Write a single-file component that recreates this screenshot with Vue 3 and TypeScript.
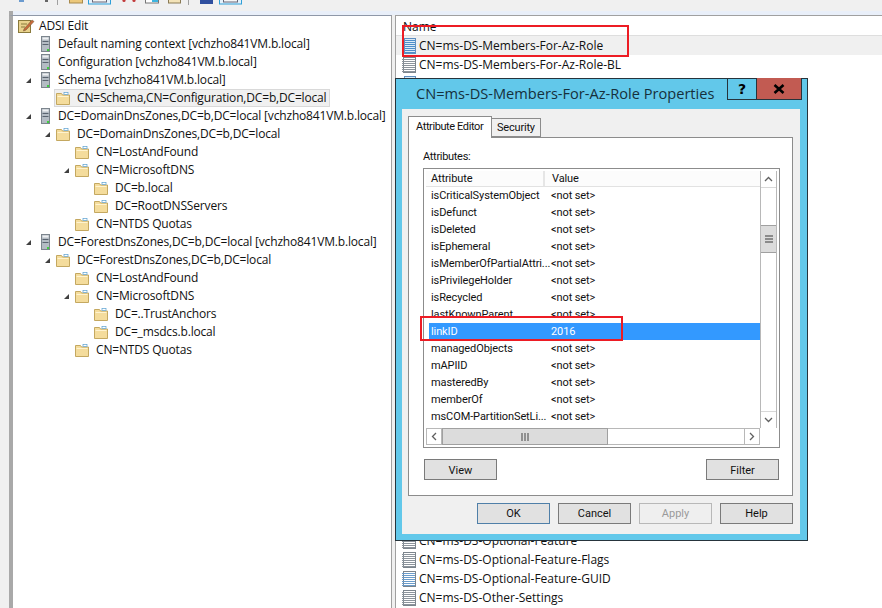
<script setup lang="ts">
interface TreeNode { depth: number; label: string; icon: 'root' | 'server' | 'folder'; open?: boolean; sel?: boolean }
const tree: TreeNode[] = [
  { depth: 0, label: 'ADSI Edit', icon: 'root' },
  { depth: 1, label: 'Default naming context [vchzho841VM.b.local]', icon: 'server' },
  { depth: 1, label: 'Configuration [vchzho841VM.b.local]', icon: 'server' },
  { depth: 1, label: 'Schema [vchzho841VM.b.local]', icon: 'server', open: true },
  { depth: 2, label: 'CN=Schema,CN=Configuration,DC=b,DC=local', icon: 'folder', sel: true },
  { depth: 1, label: 'DC=DomainDnsZones,DC=b,DC=local [vchzho841VM.b.local]', icon: 'server', open: true },
  { depth: 2, label: 'DC=DomainDnsZones,DC=b,DC=local', icon: 'folder', open: true },
  { depth: 3, label: 'CN=LostAndFound', icon: 'folder' },
  { depth: 3, label: 'CN=MicrosoftDNS', icon: 'folder', open: true },
  { depth: 4, label: 'DC=b.local', icon: 'folder' },
  { depth: 4, label: 'DC=RootDNSServers', icon: 'folder' },
  { depth: 3, label: 'CN=NTDS Quotas', icon: 'folder' },
  { depth: 1, label: 'DC=ForestDnsZones,DC=b,DC=local [vchzho841VM.b.local]', icon: 'server', open: true },
  { depth: 2, label: 'DC=ForestDnsZones,DC=b,DC=local', icon: 'folder', open: true },
  { depth: 3, label: 'CN=LostAndFound', icon: 'folder' },
  { depth: 3, label: 'CN=MicrosoftDNS', icon: 'folder', open: true },
  { depth: 4, label: 'DC=..TrustAnchors', icon: 'folder' },
  { depth: 4, label: 'DC=_msdcs.b.local', icon: 'folder' },
  { depth: 3, label: 'CN=NTDS Quotas', icon: 'folder' },
]
const attrs = [
  ['isCriticalSystemObject', '<not set>'],
  ['isDefunct', '<not set>'],
  ['isDeleted', '<not set>'],
  ['isEphemeral', '<not set>'],
  ['isMemberOfPartialAttri...', '<not set>'],
  ['isPrivilegeHolder', '<not set>'],
  ['isRecycled', '<not set>'],
  ['lastKnownParent', '<not set>'],
  ['linkID', '2016'],
  ['managedObjects', '<not set>'],
  ['mAPIID', '<not set>'],
  ['masteredBy', '<not set>'],
  ['memberOf', '<not set>'],
  ['msCOM-PartitionSetLi...', '<not set>'],
]
const lowerRows = [
  'CN=ms-DS-Optional-Feature',
  'CN=ms-DS-Optional-Feature-Flags',
  'CN=ms-DS-Optional-Feature-GUID',
  'CN=ms-DS-Other-Settings',
]
const lines = [2, 4, 6, 8, 10, 12, 14]
</script>

<template>
  <div class="screen">
    <div class="toolbar">
      <svg class="tool-art" width="260" height="11" viewBox="0 0 260 11">
        <path d="M19 1h5" fill="none" stroke="#3f7fc4" stroke-width="1.500" />
        <path d="M45 1h3" fill="none" stroke="#666" stroke-width="2" />
        <rect x="57" y="0" width="1" height="5" fill="#a0a0a0" />
        <rect x="69.500" y="-2" width="13" height="5" fill="#ecc87a" stroke="#a88a4c" />
        <rect x="88.500" y="-3" width="22" height="7" fill="#e4f1fa" stroke="#2f9fd8" />
        <rect x="92.500" y="-2" width="14" height="4" fill="#f6f6f6" stroke="#667" />
        <circle cx="124" cy="0.500" r="1.600" fill="#c23a3a" />
        <circle cx="134" cy="0.500" r="1.600" fill="#c23a3a" />
        <rect x="145.500" y="-2" width="13" height="5" fill="#fff" stroke="#777" />
        <rect x="152" y="0" width="6" height="2" fill="#3fb5e0" />
        <rect x="168.500" y="-2" width="12" height="5" fill="#f3e3b8" stroke="#8a7a55" />
        <rect x="188" y="0" width="1" height="5" fill="#a0a0a0" />
        <rect x="200" y="0" width="13" height="4" fill="#2f4f9f" />
        <rect x="219.500" y="-3" width="22" height="7" fill="#e4f1fa" stroke="#2f9fd8" />
        <rect x="223.500" y="-2" width="14" height="4" fill="#f6f6f6" stroke="#667" />
      </svg>
    </div>
    <div class="strip"></div>
    <div class="panes">
      <div class="tree">
        <div v-for="n in tree" :key="n.label + n.depth" class="tree-row" :class="'d' + n.depth">
          <svg v-if="n.open" class="twist" width="7" height="7" viewBox="0 0 7 7"><path d="M6 1v5H1z" fill="#404040" /></svg>
          <span v-else class="twist"></span>
          <span class="item" :class="{ sel: n.sel }">
            <svg v-if="n.icon === 'root'" class="ico" width="17" height="16" viewBox="0 0 17 16">
              <rect x="0.500" y="2.500" width="12" height="12" fill="#e9d28c" stroke="#8a7a3c" />
              <path d="M3 6h6M3 9h4" stroke="#8a7a3c" />
              <path d="M6 11 14 2l2 1.500L8 12l-2.500 1z" fill="#c96a3a" stroke="#7a5a3a" stroke-width=".6" />
            </svg>
            <svg v-else-if="n.icon === 'server'" class="ico" width="9" height="16" viewBox="0 0 9 16">
              <rect x="0.500" y="0.500" width="8" height="15" fill="#b4bcc4" stroke="#7c858d" />
              <rect x="1.500" y="1.500" width="6" height="2" fill="#eef0f2" />
              <rect x="1.500" y="5" width="6" height="1" fill="#5a6470" />
              <rect x="1.500" y="8" width="6" height="1" fill="#5a6470" />
              <rect x="6" y="13" width="2" height="2" fill="#3fcf3f" />
            </svg>
            <svg v-else class="ico" width="14" height="13" viewBox="0 0 14 13">
              <path d="M.5 12.500V1.500h5l1 1.500h7v9.500z" fill="#f4dc9c" stroke="#c4a860" />
              <rect x="8" y="0.500" width="4" height="2" fill="#fff" stroke="#5aa0d0" stroke-width=".7" />
              <rect x="1.500" y="4" width="11" height="1" fill="#fff3cf" />
            </svg>
            <span class="tree-label">{{ n.label }}</span>
          </span>
        </div>
      </div>
      <div class="list">
        <div class="list-head">Name</div>
        <div class="row first">
          <svg class="doc" width="14" height="16" viewBox="0 0 14 16">
            <rect x="2.500" y="0.500" width="11" height="15" fill="#dbeaf7" stroke="#5f8fc0" />
            <path v-for="l in lines" :key="l" :d="`M3 ${l + 0.5}h10`" stroke="#4d8ec9" />
          </svg>
          <span>CN=ms-DS-Members-For-Az-Role</span>
        </div>
        <div class="row">
          <svg class="doc" width="14" height="16" viewBox="0 0 14 16">
            <rect x="1.500" y="0.500" width="12" height="15" fill="#fff" stroke="#7c858d" />
            <path v-for="l in lines" :key="l" :d="`M0 ${l + 0.5}h13`" stroke="#8c949c" />
          </svg>
          <span>CN=ms-DS-Members-For-Az-Role-BL</span>
        </div>
        <div class="row">
          <svg class="doc" width="14" height="16" viewBox="0 0 14 16">
            <rect x="2.500" y="0.500" width="11" height="15" fill="#dbeaf7" stroke="#5f8fc0" />
          </svg>
        </div>
        <div class="hidden-rows"></div>
        <div v-for="(name, i) in lowerRows" :key="name" class="row">
          <svg class="doc" width="14" height="16" viewBox="0 0 14 16">
            <rect x="1.500" y="0.500" width="12" height="15" fill="#fff" stroke="#7c858d" />
            <path v-for="l in lines" :key="l" :d="`M0 ${l + 0.5}h13`" :stroke="i === 2 ? '#6a9ccb' : '#8c949c'" />
          </svg>
          <span>{{ name }}</span>
        </div>
      </div>
    </div>

    <div class="dialog">
      <div class="titlebar">
        <span class="title">CN=ms-DS-Members-For-Az-Role Properties</span>
        <div class="caption">
          <span class="cap help">?</span>
          <span class="cap close">
            <svg width="12" height="10" viewBox="0 0 12 10"><path d="M1.500 1 10.500 9M10.500 1 1.500 9" stroke="#000" stroke-width="2.600" /></svg>
          </span>
        </div>
      </div>
      <div class="client">
        <div class="tabs">
          <span class="tab active">Attribute Editor</span>
          <span class="tab">Security</span>
        </div>
        <div class="page">
          <div class="attr-label">Attributes:</div>
          <div class="lv">
            <div class="lv-top">
              <div class="lv-main">
                <div class="lv-head">
                  <span class="col-a">Attribute</span>
                  <span class="col-v">Value</span>
                </div>
                <div v-for="a in attrs" :key="a[0]" class="lv-row" :class="{ on: a[0] === 'linkID' }">
                  <span class="col-a">{{ a[0] }}</span>
                  <span class="col-v">{{ a[1] }}</span>
                </div>
              </div>
              <div class="vbar">
                <div class="arrow">
                  <svg width="9" height="6" viewBox="0 0 9 6"><path d="M1 5 4.500 1.500 8 5" fill="none" stroke="#606060" stroke-width="1.300" /></svg>
                </div>
                <div class="vspace top"></div>
                <div class="vthumb">
                  <svg width="8" height="8" viewBox="0 0 8 8"><path d="M0 1h8M0 4h8M0 7h8" stroke="#707070" stroke-width="1.400" /></svg>
                </div>
                <div class="vspace"></div>
                <div class="arrow">
                  <svg width="9" height="6" viewBox="0 0 9 6"><path d="M1 1 4.500 4.500 8 1" fill="none" stroke="#606060" stroke-width="1.300" /></svg>
                </div>
              </div>
            </div>
            <div class="hbar">
              <div class="harrow">
                <svg width="6" height="9" viewBox="0 0 6 9"><path d="M5 1 1.500 4.500 5 8" fill="none" stroke="#606060" stroke-width="1.300" /></svg>
              </div>
              <div class="hthumb">
                <svg width="8" height="8" viewBox="0 0 8 8"><path d="M1 0v8M4 0v8M7 0v8" stroke="#707070" stroke-width="1.400" /></svg>
              </div>
              <div class="hspace"></div>
              <div class="harrow">
                <svg width="6" height="9" viewBox="0 0 6 9"><path d="M1 1 4.500 4.500 1 8" fill="none" stroke="#606060" stroke-width="1.300" /></svg>
              </div>
            </div>
          </div>
          <div class="page-btns">
            <button class="btn">View</button>
            <button class="btn">Filter</button>
          </div>
        </div>
        <div class="dlg-btns">
          <button class="btn default">OK</button>
          <button class="btn">Cancel</button>
          <button class="btn off">Apply</button>
          <button class="btn">Help</button>
        </div>
      </div>
    </div>

    <div class="mark mark-a"></div>
    <div class="mark mark-b"></div>
  </div>
</template>

<style scoped>
.screen {
  position: relative;
  width: 882px;
  height: 608px;
  overflow: hidden;
  background: #f0f0f0;
  font-family: "Open Sans", "Noto Sans", sans-serif;
  font-size: 12px;
  color: #111;
  display: flex;
  flex-direction: column;
}
.toolbar { height: 11px; flex: none; }
.tool-art { display: block; }
.strip { height: 4px; margin-left: 9px; background: #e9eff9; border-left: 4px solid #a9a9a9; flex: none; }
.panes { flex: 1; display: flex; min-height: 0; padding-left: 9px; }
.tree {
  width: 383px;
  box-sizing: border-box;
  border-left: 4px solid #a9a9a9;
  border-right: 1px solid #a0a0a0;
  border-top: 1px solid #8f98a8;
  background: #fff;
  padding-top: 1px;
  flex: none;
  overflow: hidden;
}
.tree-row { height: 18px; display: flex; align-items: center; white-space: nowrap; letter-spacing: -0.17px; }
.d0 { padding-left: 5px; }
.d1 { padding-left: 12px; }
.d2 { padding-left: 31px; }
.d3 { padding-left: 50px; }
.d4 { padding-left: 69px; }
.twist { width: 7px; height: 7px; flex: none; }
.d0 .twist { width: 0; }
.item { display: inline-flex; align-items: center; height: 18px; box-sizing: border-box; padding: 0 3px 0 1px; border: 1px solid transparent; }
.d0 .item { margin-left: -2px; }
.d1 .item { margin-left: 7px; }
.d2 .item, .d3 .item, .d4 .item { margin-left: 3px; }
.item.sel { background: #f0f0f0; border-color: #d9d9d9; }
.ico { flex: none; }
.d0 .ico { margin-right: 4px; }
.d1 .ico { margin-right: 8px; }
.d2 .ico, .d3 .ico, .d4 .ico { margin-right: 7px; }
.tree-label { line-height: 16px; }
.list {
  flex: 1;
  margin-left: 3px;
  border-left: 1px solid #a0a0a0;
  border-top: 1px solid #a0a0a0;
  background: #fff;
  min-width: 0;
}
.list-head {
  height: 20px;
  padding: 3px 0 0 7px;
  box-sizing: border-box;
  line-height: 16px;
  border-bottom: 1px solid #dedede;
  overflow: hidden;
}
.row {
  height: 19px;
  display: flex;
  align-items: center;
  gap: 3px;
  padding-left: 6px;
  white-space: nowrap;
}
.row.first { background: #f0f0f0; }
.doc { flex: none; }
.hidden-rows { height: 438px; }
.dialog {
  position: absolute;
  left: 395px;
  top: 78px;
  width: 413px;
  height: 463px;
  box-sizing: border-box;
  background: #62c8ea;
  border: 1px solid #26343c;
  display: flex;
  flex-direction: column;
  padding: 0 7px 6px 6px;
  font-family: Roboto, "Open Sans", sans-serif;
  font-size: 11px;
}
.titlebar { height: 30px; display: flex; position: relative; flex: none; }
.title { font-family: "Open Sans", sans-serif; font-size: 14.600px; color: #16303c; margin-left: 14px; margin-top: 3px; line-height: 22px; white-space: nowrap; }
.caption { position: absolute; right: -2px; top: -1px; display: flex; height: 22px; }
.cap { display: flex; align-items: center; justify-content: center; box-sizing: border-box; border: 1px solid #26343c; border-top: 0; }
.help { width: 29px; font-weight: 700; font-size: 14px; color: #000; border-right: 0; font-family: "DejaVu Sans", sans-serif; }
.close { width: 46px; background: #c25b52; }
.client { flex: 1; background: #f0f0f0; padding: 7px 7px 10px 6px; display: flex; flex-direction: column; min-height: 0; }
.tabs { display: flex; align-items: flex-end; height: 22px; flex: none; position: relative; z-index: 1; }
.tab { height: 19px; box-sizing: border-box; border: 1px solid #8c8c8c; border-left: 0; padding: 0 5px; line-height: 18px; background: #f0f0f0; margin-bottom: 1px; white-space: nowrap; letter-spacing: -0.2px; }
.tab.active { height: 22px; margin-bottom: 0; background: #fff; border-left: 1px solid #8c8c8c; border-bottom: 0; width: 84px; padding: 1px 0 0 7px; letter-spacing: -0.4px; }
.page { flex: 1; background: #fff; border: 1px solid #8c8c8c; margin-top: -1px; padding: 11px 12px 0 14px; box-sizing: border-box; min-height: 0; }
.attr-label { line-height: 16px; height: 19px; letter-spacing: -0.3px; }
.lv { border: 1px solid #8c8c8c; height: 280px; box-sizing: border-box; padding: 2px; display: flex; flex-direction: column; }
.lv-top { display: flex; flex: 1; min-height: 0; }
.lv-main { flex: 1; min-width: 0; padding-left: 3px; overflow: hidden; letter-spacing: -0.1px; }
.lv-head { display: flex; height: 15px; line-height: 15px; border-bottom: 1px solid #e2e2e2; background: #fcfcfc; margin-left: -3px; padding-left: 3px; }
.lv-row { display: flex; height: 17px; line-height: 17px; white-space: nowrap; }
.lv-row.on { background: #3399ff; color: #fff; }
.col-a { width: 120px; padding-left: 2px; overflow: hidden; flex: none; }
.lv-head .col-a { border-right: 2px solid #e6e6e6; width: 112px; margin-right: 7px; }
.vbar { width: 17px; flex: none; box-sizing: border-box; border-left: 1px solid #b8b8b8; border-right: 1px solid #b8b8b8; display: flex; flex-direction: column; }
.arrow { height: 16px; display: flex; align-items: center; justify-content: center; flex: none; border-bottom: 1px solid #d8d8d8; }
.arrow:last-child { border-top: 1px solid #d8d8d8; border-bottom: 0; }
.vspace { flex: 1; }
.vspace.top { flex: none; height: 37px; }
.vthumb { height: 28px; flex: none; background: #dcdcdc; border-top: 1px solid #a0a0a0; border-bottom: 1px solid #a0a0a0; display: flex; align-items: center; justify-content: center; box-sizing: border-box; }
.hbar { height: 17px; flex: none; display: flex; background: #f0f0f0; margin-right: 17px; }
.harrow { width: 16px; flex: none; background: #fff; display: flex; align-items: center; justify-content: center; border: 1px solid #b8b8b8; box-sizing: border-box; }
.hthumb { width: 166px; flex: none; background: #dcdcdc; border: 1px solid #a0a0a0; box-sizing: border-box; display: flex; align-items: center; justify-content: center; }
.hspace { flex: 1; background: #fff; border-top: 1px solid #b8b8b8; border-bottom: 1px solid #b8b8b8; }
.page-btns { display: flex; justify-content: space-between; margin-top: 11px; padding: 0 1px; }
.page-btns .btn { padding-top: 1px; }
.btn { width: 73px; height: 21px; padding: 0; box-sizing: border-box; background: #e1e1e1; border: 1px solid #7a7a7a; font: inherit; color: #111; display: block; }
.btn.default { border-color: #4f7fa8; }
.btn.off { background: #efefef; border-color: #b8b8b8; color: #9a9a9a; }
.dlg-btns { display: flex; justify-content: flex-end; gap: 8px; margin-top: 7px; flex: none; }
.mark { position: absolute; border: 2px solid #ed1c24; box-sizing: border-box; }
.mark-a { left: 402px; top: 25px; width: 227px; height: 32px; }
.mark-b { left: 420px; top: 316px; width: 203px; height: 25px; }
</style>
